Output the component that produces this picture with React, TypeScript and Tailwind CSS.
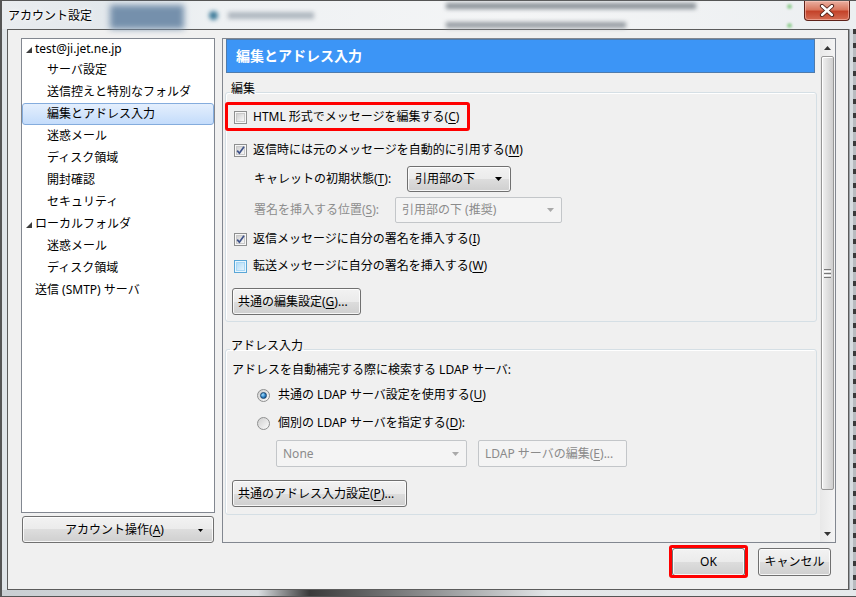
import React from "react";

const U = ({ c }: { c: string }) => <span className="underline underline-offset-[2px]">{c}</span>;

function CheckBox({ checked = false, hot = false }: { checked?: boolean; hot?: boolean }) {
  return (
    <span
      className={
        hot
          ? "flex h-[13px] w-[13px] shrink-0 items-center justify-center border border-[#5aa6d6] bg-[#eaf6fd]"
          : "flex h-[13px] w-[13px] shrink-0 items-center justify-center border border-[#8e8f8f] bg-[#f7f7f7]"
      }
    >
      {hot ? (
        <span className="h-[9px] w-[9px] border border-[#a6d7f7] bg-[linear-gradient(135deg,#b4dcf5,#e3f3fd)]" />
      ) : (
        <span className="flex h-[9px] w-[9px] items-center justify-center border border-[#c9c9c9] bg-[linear-gradient(135deg,#d0d0d0,#f8f8f8)]">
          {checked && (
            <svg width="9" height="9" viewBox="0 0 9 9" className="overflow-visible">
              <path d="M1.2 4.6 L3.4 7.2 L8 0.8" fill="none" stroke="#3f5288" strokeWidth="1.7" />
            </svg>
          )}
        </span>
      )}
    </span>
  );
}

function Radio({ on = false }: { on?: boolean }) {
  return (
    <span className="flex h-[13px] w-[13px] shrink-0 items-center justify-center rounded-full border border-[#8e8f8f] bg-[linear-gradient(135deg,#cfcfcf,#fbfbfb)]">
      {on && (
        <span className="h-[7px] w-[7px] rounded-full border border-[#1a4670] bg-[radial-gradient(circle_at_35%_35%,#a6e0ff,#2a7fc4_55%,#0c3f6d)]" />
      )}
    </span>
  );
}

const btn =
  "flex items-center border border-[#707070] rounded-[3px] bg-[linear-gradient(#f2f2f2_0%,#ebebeb_50%,#dddddd_50%,#cfcfcf_100%)] shadow-[inset_0_0_0_1px_rgba(255,255,255,0.8)] text-black";

const disabledBox =
  "flex items-center border border-[#c3c6c9] rounded-[2px] bg-[#f4f4f4] text-[#8b8b8b]";

function Arrow({ color = "#000" }: { color?: string }) {
  return (
    <svg width="7" height="4" viewBox="0 0 7 4">
      <path d="M0 0 H7 L3.5 4 Z" fill={color} />
    </svg>
  );
}

function TreeRow({
  label,
  level,
  selected = false,
  first = false,
}: {
  label: string;
  level: 0 | 1 | 2;
  selected?: boolean;
  first?: boolean;
}) {
  return (
    <div
      className={
        selected
          ? "flex h-[22px] items-center rounded-[3px] border border-[#84acdd] bg-[linear-gradient(#e4effd,#c4dcfb)] pl-[24px]"
          : first
          ? "flex h-[20px] items-center pl-[4px]"
          : level === 1
          ? "flex h-[22px] items-center pl-[25px]"
          : level === 2
          ? "flex h-[22px] items-center pl-[13px]"
          : "flex h-[22px] items-center pl-[4px]"
      }
    >
      {level === 0 && (
        <svg width="6" height="6" viewBox="0 0 6 6" className="mr-[3px] mt-[1px]">
          <path d="M6 0 V6 H0 Z" fill="#3c3c3c" />
        </svg>
      )}
      <span>{label}</span>
    </div>
  );
}

export default function App() {
  return (
    <div className="relative flex h-[597px] w-[856px] flex-col overflow-hidden bg-[#dde2e7] font-['Noto_Sans','Noto_Sans_CJK_JP',sans-serif] text-[12px] leading-[16px] text-black">
      {/* title bar */}
      <div className="relative flex h-[29px] shrink-0 items-start border-l-2 border-t border-[#555] pl-[6px] pr-[6px]">
        <div className="pointer-events-none absolute inset-0 bg-[linear-gradient(90deg,#e9ecef_0%,#e3e8ec_12%,#eef1f3_25%,#f4f5f6_60%,#eceff1_100%)]" />
        <div className="pointer-events-none absolute left-[108px] top-[4px] h-[24px] w-[74px] bg-[#7590ac] blur-[3px]" />
        <div className="pointer-events-none absolute left-[207px] top-[10px] h-[9px] w-[9px] rounded-full bg-[#3f7c9a] blur-[2px]" />
        <div className="pointer-events-none absolute left-[226px] top-[11px] h-[7px] w-[86px] bg-[#b0b8c0] blur-[2px]" />
        <div className="pointer-events-none absolute left-[444px] top-[2px] h-[6px] w-[250px] bg-[#8a9198] blur-[2px]" />
        <div className="pointer-events-none absolute left-[444px] top-[21px] h-[6px] w-[180px] bg-[#969ca2] blur-[2px]" />
        <div className="pointer-events-none absolute left-[785px] top-[3px] h-[5px] w-[5px] rounded-full bg-[#9bd19b] blur-[1px]" />
        <div className="pointer-events-none absolute left-[785px] top-[22px] h-[5px] w-[5px] rounded-full bg-[#9bd19b] blur-[1px]" />
        <span className="relative z-10 mt-[7px] text-[12px] leading-[16px] text-black [text-shadow:0_0_6px_#fff,0_0_3px_#fff]">
          アカウント設定
        </span>
        <div className="relative z-10 ml-auto flex h-[20px] w-[46px] items-center justify-center rounded-b-[4px] border border-t-0 border-[#5e2219] bg-[linear-gradient(#eab0a1_0%,#d9775f_45%,#c4432a_55%,#d56c53_100%)] shadow-[inset_0_0_0_1px_rgba(255,210,200,0.5)]">
          <svg width="16" height="13" viewBox="0 0 16 13">
            <path d="M3 2 L13 11 M13 2 L3 11" stroke="#4a1d16" strokeWidth="4.2" strokeLinecap="round" />
            <path d="M3 2 L13 11 M13 2 L3 11" stroke="#ffffff" strokeWidth="2.4" strokeLinecap="round" />
          </svg>
        </div>
      </div>

      {/* middle */}
      <div className="flex min-h-0 flex-1">
        <div className="w-[7px] shrink-0 border-l-2 border-[#555] bg-[#dfe4e8]" />
        <div className="flex w-[842px] shrink-0 flex-col border border-[#5b5b5b] bg-[#f0f0f0] pl-[13px] pt-[8px]">
          <div className="flex gap-[7px]">
            {/* left column */}
            <div className="flex w-[194px] flex-col">
              <div className="h-[475px] border border-[#828790] bg-white">
                <TreeRow label="test@ji.jet.ne.jp" level={0} first />
                <TreeRow label="サーバ設定" level={1} />
                <TreeRow label="送信控えと特別なフォルダ" level={1} />
                <TreeRow label="編集とアドレス入力" level={1} selected />
                <TreeRow label="迷惑メール" level={1} />
                <TreeRow label="ディスク領域" level={1} />
                <TreeRow label="開封確認" level={1} />
                <TreeRow label="セキュリティ" level={1} />
                <TreeRow label="ローカルフォルダ" level={0} />
                <TreeRow label="迷惑メール" level={1} />
                <TreeRow label="ディスク領域" level={1} />
                <TreeRow label="送信 (SMTP) サーバ" level={2} />
              </div>
              <div className={btn + " ml-[1px] mt-[3px] h-[27px] w-[192px]"}>
                <span className="flex-1 pl-[8px] text-center">
                  アカウント操作(<U c="A" />)
                </span>
                <span className="mr-[10px] mt-[1px]">
                  <svg width="5" height="3" viewBox="0 0 5 3">
                    <path d="M0 0 H5 L2.5 3 Z" fill="#000" />
                  </svg>
                </span>
              </div>
            </div>

            {/* right panel */}
            <div className="flex h-[505px] w-[614px] border border-[#828790] bg-[#f0f0f0]">
              <div className="flex min-w-0 flex-1 flex-col overflow-hidden pl-[2px]">
                <div className="ml-[1px] flex h-[34px] w-[589px] shrink-0 items-center border border-[#4f7bac] bg-[#3c95f6] pl-[9px] text-[14px] font-bold leading-[18px] text-white">
                  編集とアドレス入力
                </div>

                {/* 編集 group */}
                <fieldset className="mt-[9px] w-[592px] shrink-0 rounded-[3px] border border-[#d5dfe5] p-0 pb-[6px] shadow-[inset_1px_1px_0_#fff]">
                  <legend className="ml-[4px] px-[1px] pb-[6px] text-[12px] leading-[14px]">編集</legend>
                  <div className="relative mt-[2px] flex h-[26px] items-center pl-[8px]">
                    <span className="pointer-events-none absolute left-[-1px] top-[-2px] h-[29px] w-[245px] rounded-[3px] border-[3px] border-[#ff0000]" />
                    <CheckBox />
                    <span className="ml-[6px]">
                      HTML 形式でメッセージを編集する(<U c="C" />)
                    </span>
                  </div>
                  <div className="mt-[7px] flex h-[26px] items-center pl-[8px]">
                    <CheckBox checked />
                    <span className="ml-[6px]">
                      返信時には元のメッセージを自動的に引用する(<U c="M" />)
                    </span>
                  </div>
                  <div className="mt-[3px] flex h-[26px] items-center pl-[28px]">
                    <span className="w-[153px] shrink-0">
                      キャレットの初期状態(<U c="T" />):
                    </span>
                    <div className={btn + " h-[26px] w-[104px] pl-[7px] pr-[8px]"}>
                      <span className="flex-1">引用部の下</span>
                      <Arrow />
                    </div>
                  </div>
                  <div className="mt-[5px] flex h-[26px] items-center pl-[28px]">
                    <span className="w-[141px] shrink-0 text-[#8d8d8d]">
                      署名を挿入する位置(<U c="S" />):
                    </span>
                    <div className={disabledBox + " h-[26px] w-[167px] pl-[6px] pr-[7px]"}>
                      <span className="flex-1">引用部の下 (推奨)</span>
                      <Arrow color="#a9a9a9" />
                    </div>
                  </div>
                  <div className="mt-[3px] flex h-[26px] items-center pl-[8px]">
                    <CheckBox checked />
                    <span className="ml-[6px]">
                      返信メッセージに自分の署名を挿入する(<U c="I" />)
                    </span>
                  </div>
                  <div className="mt-[1px] flex h-[26px] items-center pl-[8px]">
                    <CheckBox hot />
                    <span className="ml-[6px]">
                      転送メッセージに自分の署名を挿入する(<U c="W" />)
                    </span>
                  </div>
                  <div className="mt-[9px] pl-[6px]">
                    <div className={btn + " h-[27px] w-[129px] pl-[5px]"}>
                      共通の編集設定(<U c="G" />)...
                    </div>
                  </div>
                </fieldset>

                {/* アドレス入力 group */}
                <fieldset className="mt-[17px] w-[592px] shrink-0 rounded-[3px] border border-[#d5dfe5] p-0 pb-[7px] shadow-[inset_1px_1px_0_#fff]">
                  <legend className="ml-[4px] px-[1px] pb-[6px] text-[12px] leading-[14px]">アドレス入力</legend>
                  <div className="flex h-[22px] items-center pl-[6px]">
                    アドレスを自動補完する際に検索する LDAP サーバ:
                  </div>
                  <div className="mt-[2px] flex h-[24px] items-center pl-[31px]">
                    <Radio on />
                    <span className="ml-[8px]">
                      共通の LDAP サーバ設定を使用する(<U c="U" />)
                    </span>
                  </div>
                  <div className="mt-[4px] flex h-[24px] items-center pl-[31px]">
                    <Radio />
                    <span className="ml-[8px]">
                      個別の LDAP サーバを指定する(<U c="D" />):
                    </span>
                  </div>
                  <div className="mt-[5px] flex h-[27px] items-center gap-[11px] pl-[50px]">
                    <div className={disabledBox + " h-[27px] w-[191px] pl-[6px] pr-[7px]"}>
                      <span className="flex-1">None</span>
                      <Arrow color="#a9a9a9" />
                    </div>
                    <div className={disabledBox + " h-[27px] w-[149px] pl-[6px]"}>
                      LDAP サーバの編集(<U c="E" />)...
                    </div>
                  </div>
                  <div className="mt-[13px] pl-[6px]">
                    <div className={btn + " h-[27px] w-[175px] pl-[5px]"}>
                      共通のアドレス入力設定(<U c="P" />)...
                    </div>
                  </div>
                </fieldset>
              </div>

              {/* scrollbar */}
              <div className="flex w-[15px] shrink-0 flex-col bg-[linear-gradient(90deg,#e8e8e8,#f4f4f4)]">
                <div className="flex h-[17px] items-center justify-center">
                  <svg width="7" height="4" viewBox="0 0 7 4">
                    <path d="M3.5 0 L7 4 H0 Z" fill="#333" />
                  </svg>
                </div>
                <div className="mx-[1px] flex h-[434px] items-center justify-center rounded-[2px] border border-[#979797] bg-[linear-gradient(90deg,#f2f2f2,#dedede_55%,#cfcfcf)] shadow-[inset_1px_1px_0_#fff]">
                  <div className="flex flex-col gap-[1px]">
                    <span className="h-[1px] w-[7px] bg-[#777]" />
                    <span className="h-[1px] w-[7px] bg-[#fff]" />
                    <span className="h-[1px] w-[7px] bg-[#777]" />
                    <span className="h-[1px] w-[7px] bg-[#fff]" />
                    <span className="h-[1px] w-[7px] bg-[#777]" />
                  </div>
                </div>
                <div className="flex-1" />
                <div className="flex h-[17px] items-center justify-center">
                  <svg width="7" height="4" viewBox="0 0 7 4">
                    <path d="M0 0 H7 L3.5 4 Z" fill="#333" />
                  </svg>
                </div>
              </div>
            </div>
          </div>

          {/* bottom buttons */}
          <div className="mt-[5px] flex justify-end gap-[13px] pr-[17px]">
            <div className="relative">
              <span className="pointer-events-none absolute left-[-3px] top-[-3px] h-[33px] w-[79px] rounded-[3px] border-[3px] border-[#ff0000]" />
              <div className={btn + " h-[28px] w-[73px] justify-center border-[#3c7fb1] shadow-[inset_0_0_0_1px_#7fd6f5]"}>
                OK
              </div>
            </div>
            <div className={btn + " h-[28px] w-[73px] justify-center"}>キャンセル</div>
          </div>
        </div>
        <div className="w-[7px] shrink-0 border-l border-[#9aa0a5] bg-[#d7dce0] bg-[repeating-linear-gradient(180deg,#3a3a3a_0px,#3a3a3a_5px,#b8bcc0_5px,#b8bcc0_14px)] bg-[length:3px_100%] bg-right bg-no-repeat" />
      </div>
      <div className="h-[7px] shrink-0 border-b border-l-2 border-[#555] bg-[linear-gradient(90deg,#c9ced2_0%,#d9dde0_30%,#3a3a3a_36%,#e3e6e8_64%,#e6e9eb_100%)]" />
    </div>
  );
}
